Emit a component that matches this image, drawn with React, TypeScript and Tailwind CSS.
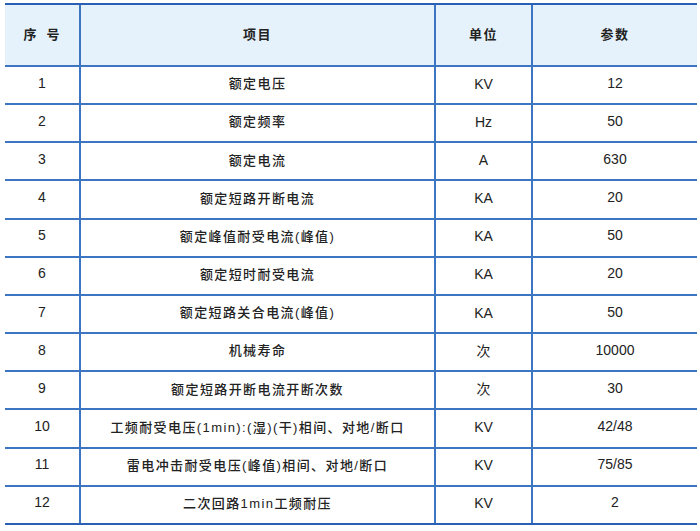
const rows = [
  ["1", "额定电压", "KV", "12"],
  ["2", "额定频率", "Hz", "50"],
  ["3", "额定电流", "A", "630"],
  ["4", "额定短路开断电流", "KA", "20"],
  ["5", "额定峰值耐受电流(峰值)", "KA", "50"],
  ["6", "额定短时耐受电流", "KA", "20"],
  ["7", "额定短路关合电流(峰值)", "KA", "50"],
  ["8", "机械寿命", "次", "10000"],
  ["9", "额定短路开断电流开断次数", "次", "30"],
  ["10", "工频耐受电压(1min):(湿)(干)相间、对地/断口", "KV", "42/48"],
  ["11", "雷电冲击耐受电压(峰值)相间、对地/断口", "KV", "75/85"],
  ["12", "二次回路1min工频耐压", "KV", "2"],
]

const cols = "grid grid-cols-[74px_355px_97px_166px]"

export default function App() {
  return (
    <div className="w-[700px] h-[531px] bg-white overflow-hidden pt-[3px] pl-[5px] font-['Liberation_Sans','Noto_Sans_CJK_SC',sans-serif] text-[14px] text-[#222]">
      <div className="w-[692px] border-t-2 border-b-2 border-[#2a60b4]">
        <div className={`${cols} h-[60px] bg-[#e6f2fb] font-bold text-[13px]`}>
          <div className="flex items-center justify-center tracking-[1px]">序&nbsp;&nbsp;号</div>
          <div className="flex items-center justify-center border-l-2 border-[#3c76c2] tracking-[1.5px]">项目</div>
          <div className="flex items-center justify-center border-l-2 border-[#3c76c2] tracking-[1.5px]">单位</div>
          <div className="flex items-center justify-center border-l-2 border-[#3c76c2] tracking-[1.5px]">参数</div>
        </div>
        {rows.map((r) => (
          <div key={r[0]} className={`${cols} h-[38.17px] border-t-2 border-[#3c76c2]`}>
            <div className="flex items-center justify-center pb-[4px]">{r[0]}</div>
            <div className="flex items-center justify-center border-l-2 border-[#3c76c2] pb-[2px] text-[13px] font-medium tracking-[1.4px]">{r[1]}</div>
            <div className="flex items-center justify-center border-l-2 border-[#3c76c2] pb-[2px]">{r[2]}</div>
            <div className="flex items-center justify-center border-l-2 border-[#3c76c2] pb-[4px]">{r[3]}</div>
          </div>
        ))}
      </div>
    </div>
  )
}
